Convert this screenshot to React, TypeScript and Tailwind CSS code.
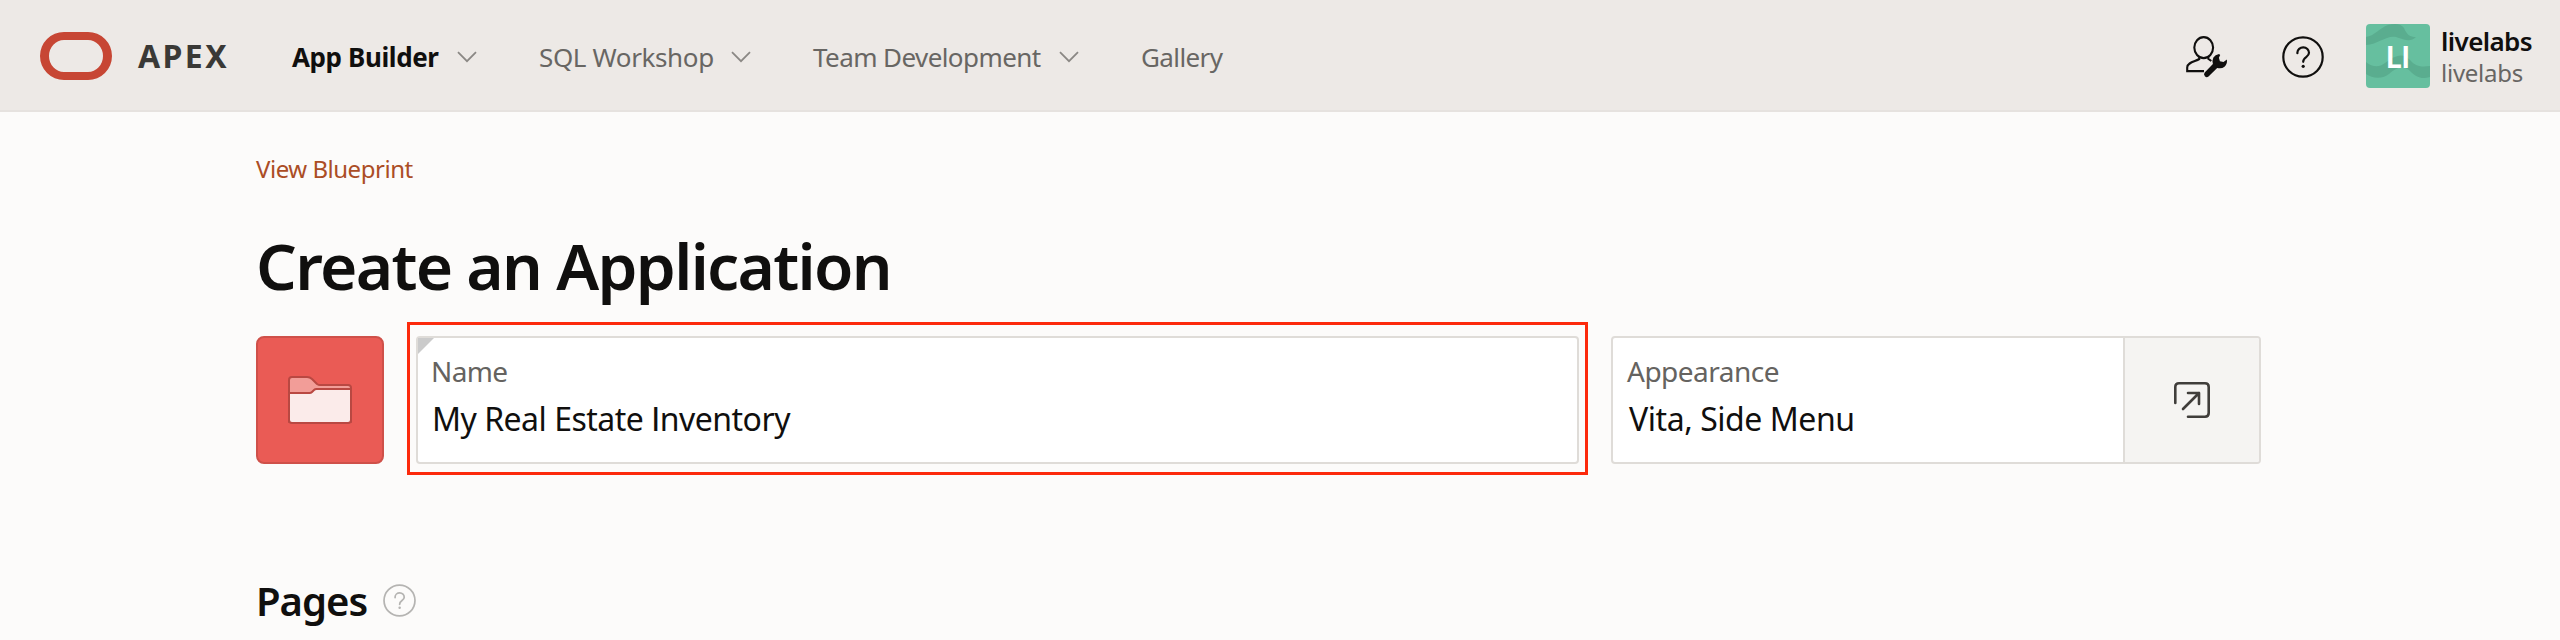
import React from "react";

type TextProps = { className?: string; children: React.ReactNode };

function Text({ className = "", children }: TextProps) {
  return <span className={`block whitespace-pre ${className}`}>{children}</span>;
}

function Chevron() {
  return (
    <svg className="block h-[12px] w-[20px]" viewBox="0 0 20 12" fill="none" stroke="#8b8885" strokeWidth="1.8">
      <path d="M1 1.2 10 10.2 19 1.2" />
    </svg>
  );
}

function HelpIcon({ className = "" }: { className?: string }) {
  return (
    <svg className={`block ${className}`} viewBox="0 0 42 42" fill="none" stroke="currentColor" strokeWidth="2.2">
      <circle cx="21" cy="21" r="19.7" />
      <path d="M15.4 17.2V16.6a5.8 5.4 0 0 1 11.6.2c0 4.6-5.8 4-5.8 9" strokeLinecap="round" />
      <circle cx="21.2" cy="30.3" r="1.6" fill="currentColor" stroke="none" />
    </svg>
  );
}

function AdminIcon() {
  return (
    <svg className="block h-[42px] w-[42px]" viewBox="0 0 42 42" fill="none" stroke="#100f0e" strokeWidth="2.1">
      <ellipse cx="17.7" cy="11.6" rx="9.4" ry="10.5" />
      <path d="M13.300 21v2C9.500 25.500 1.200 26.200 1.200 31.500v3.600H18M22.300 21v1.800l3 2.200" />
      <path
        d="M33 18q-3.800.500-5.600 3.600-1.500 3-.500 6.400L18.700 36.600a2.700 2.700 0 0 0 3.800 3.800l8.700-8.500q4.300 1.300 7.300-1.200 3-2.700 2.400-7.200l-3.400 2.500-3.600-.8-1-3.400 1.300-2.800z"
        fill="#100f0e"
        stroke="none"
      />
    </svg>
  );
}

export default function App() {
  return (
    <div className="h-[640px] w-[2560px] overflow-hidden bg-[#fcfbfa] font-['Noto_Sans','Open_Sans',sans-serif] text-[#100f0e]">
      <header className="flex h-[112px] items-start border-b-2 border-[#e6e2df] bg-[#ede9e6] text-[26px] leading-[36px] text-[#686663]">
        <div className="ml-[40px] mt-[32px] h-[48px] w-[72px] rounded-[24px] border-x-[9px] border-y-[8px] border-[#c74634]" />
        <Text className="ml-[26px] mt-[35px] w-[154px] text-[32px] leading-[42px] font-bold tracking-[2.4px] text-[#3a3936]">APEX</Text>
        <nav className="flex pt-[39px]">
          <div className="flex w-[247px]">
            <Text className="w-[165px] font-bold tracking-[-0.4px] text-[#100f0e]">App Builder</Text>
            <div className="pt-[12px]"><Chevron /></div>
          </div>
          <div className="flex w-[274px]">
            <Text className="w-[192px] tracking-[-0.37px]">SQL Workshop</Text>
            <div className="pt-[12px]"><Chevron /></div>
          </div>
          <div className="flex w-[328px]">
            <Text className="w-[246px] tracking-[-0.58px]">Team Development</Text>
            <div className="pt-[12px]"><Chevron /></div>
          </div>
          <Text className="tracking-[-0.6px]">Gallery</Text>
        </nav>
        <div className="ml-auto flex w-[374px]">
          <div className="mt-[36px] w-[96px]"><AdminIcon /></div>
          <div className="mt-[36px] w-[84px] text-[#100f0e]"><HelpIcon className="h-[42px] w-[42px]" /></div>
          <div className="relative mt-[24px] grid h-[64px] w-[64px] place-items-center overflow-hidden rounded-[4px] bg-[#66bf9f]">
            <svg className="absolute inset-0" viewBox="0 0 64 64" width="64" height="64" fill="#5aad8f">
              <path d="M0 13C8 12 14 4 22 1 30-1 35 0 38 4c3 7 6 9 12 9-5 5-11 3-17 1C22 9 14 20 0 21z" />
              <path d="M0 38c7 6 14 5 19 1 8-6 17-12 25-3 6 7 12 7 20 6v11c-9 3-15-1-20-6-8-7-15-2-21 3-8 6-17 4-23 0z" />
            </svg>
            <Text className="relative font-['Lato',sans-serif] text-[30px] leading-[36px] font-bold text-white">LI</Text>
          </div>
          <div className="ml-[11px] mt-[23px]">
            <Text className="text-[26px] leading-[36px] font-semibold tracking-[-0.6px] text-[#100f0e]">livelabs</Text>
            <Text className="text-[24px] leading-[28px] tracking-[-0.25px] text-[#686663]">livelabs</Text>
          </div>
        </div>
      </header>

      <main className="pl-[256px]">
        <Text className="h-[80px] pt-[41px] text-[24px] leading-[32px] tracking-[-0.47px] text-[#ab4d25]">View Blueprint</Text>
        <Text className="h-[130px] pt-[34px] text-[64px] leading-[80px] font-semibold tracking-[-1.7px]">Create an Application</Text>
        <div className="flex h-[153px]">
          <div className="mt-[14px] grid h-[128px] w-[128px] place-items-center rounded-[8px] border-2 border-[#cf5049] bg-[#ea5b55]">
            <svg className="block h-[48px] w-[64px]" viewBox="0 0 64 48" stroke="#b94842" strokeWidth="2" strokeLinejoin="round">
              <path d="M1 46V4q0-3 3-3h15q3 0 5 2l5 5q1.500 1 3 1h28q3 0 3 3v34z" fill="#f29d98" />
              <path d="M1 17h20.500q1.500 0 2.500-1l2-2q1-1 2.500-1H63v31q0 3-3 3H4q-3 0-3-3z" fill="#fbebea" />
            </svg>
          </div>
          <div className="ml-[23px] h-[153px] w-[1181px] border-[3px] border-[#fc2a0c] px-[6px] pt-[11px]">
            <div className="relative h-[128px] w-[1163px] rounded-[4px] border-2 border-[#dfdcd8] bg-white pl-[13px] pt-[13px]">
              <div className="absolute left-0 top-0 h-[16px] w-[16px] bg-[#cbcbcb] [clip-path:polygon(0_0,100%_0,0_100%)]" />
              <Text className="text-[28px] leading-[40px] tracking-[-0.6px] text-[#656360]">Name</Text>
              <Text className="pl-[1px] pt-[4px] text-[32px] leading-[48px] tracking-[-0.5px]">
                My Real Estate <span className="font-['Lato']">I</span>nventory
              </Text>
            </div>
          </div>
          <div className="ml-[23px] mt-[14px] flex h-[128px] w-[650px] overflow-hidden rounded-[4px] border-2 border-[#dfdcd8] bg-white">
            <div className="w-[510px] pl-[14px] pt-[13px]">
              <Text className="text-[28px] leading-[40px] tracking-[-0.5px] text-[#656360]">Appearance</Text>
              <Text className="pl-[2px] pt-[4px] text-[32px] leading-[48px] tracking-[-0.45px]">Vita, Side Menu</Text>
            </div>
            <div className="grid flex-1 place-items-center border-l-2 border-[#dfdcd8] bg-[#f5f4f2]">
              <svg className="block h-[36px] w-[36px]" viewBox="0 0 36 36" fill="none" stroke="#403e3b" strokeWidth="2.600" strokeLinecap="round" strokeLinejoin="round">
                <path d="M1.300 21V5q0-3.700 3.700-3.700h26q3.700 0 3.700 3.700v26q0 3.700-3.700 3.700H14M9 27 25 11M14 11h11v11" />
              </svg>
            </div>
          </div>
        </div>
        <div className="flex">
          <Text className="w-[127px] pt-[98px] text-[40px] leading-[56px] font-semibold tracking-[-1px]">Pages</Text>
          <div className="pt-[109px] text-[#b5b4b2]"><HelpIcon className="h-[33px] w-[33px]" /></div>
        </div>
      </main>
    </div>
  );
}
